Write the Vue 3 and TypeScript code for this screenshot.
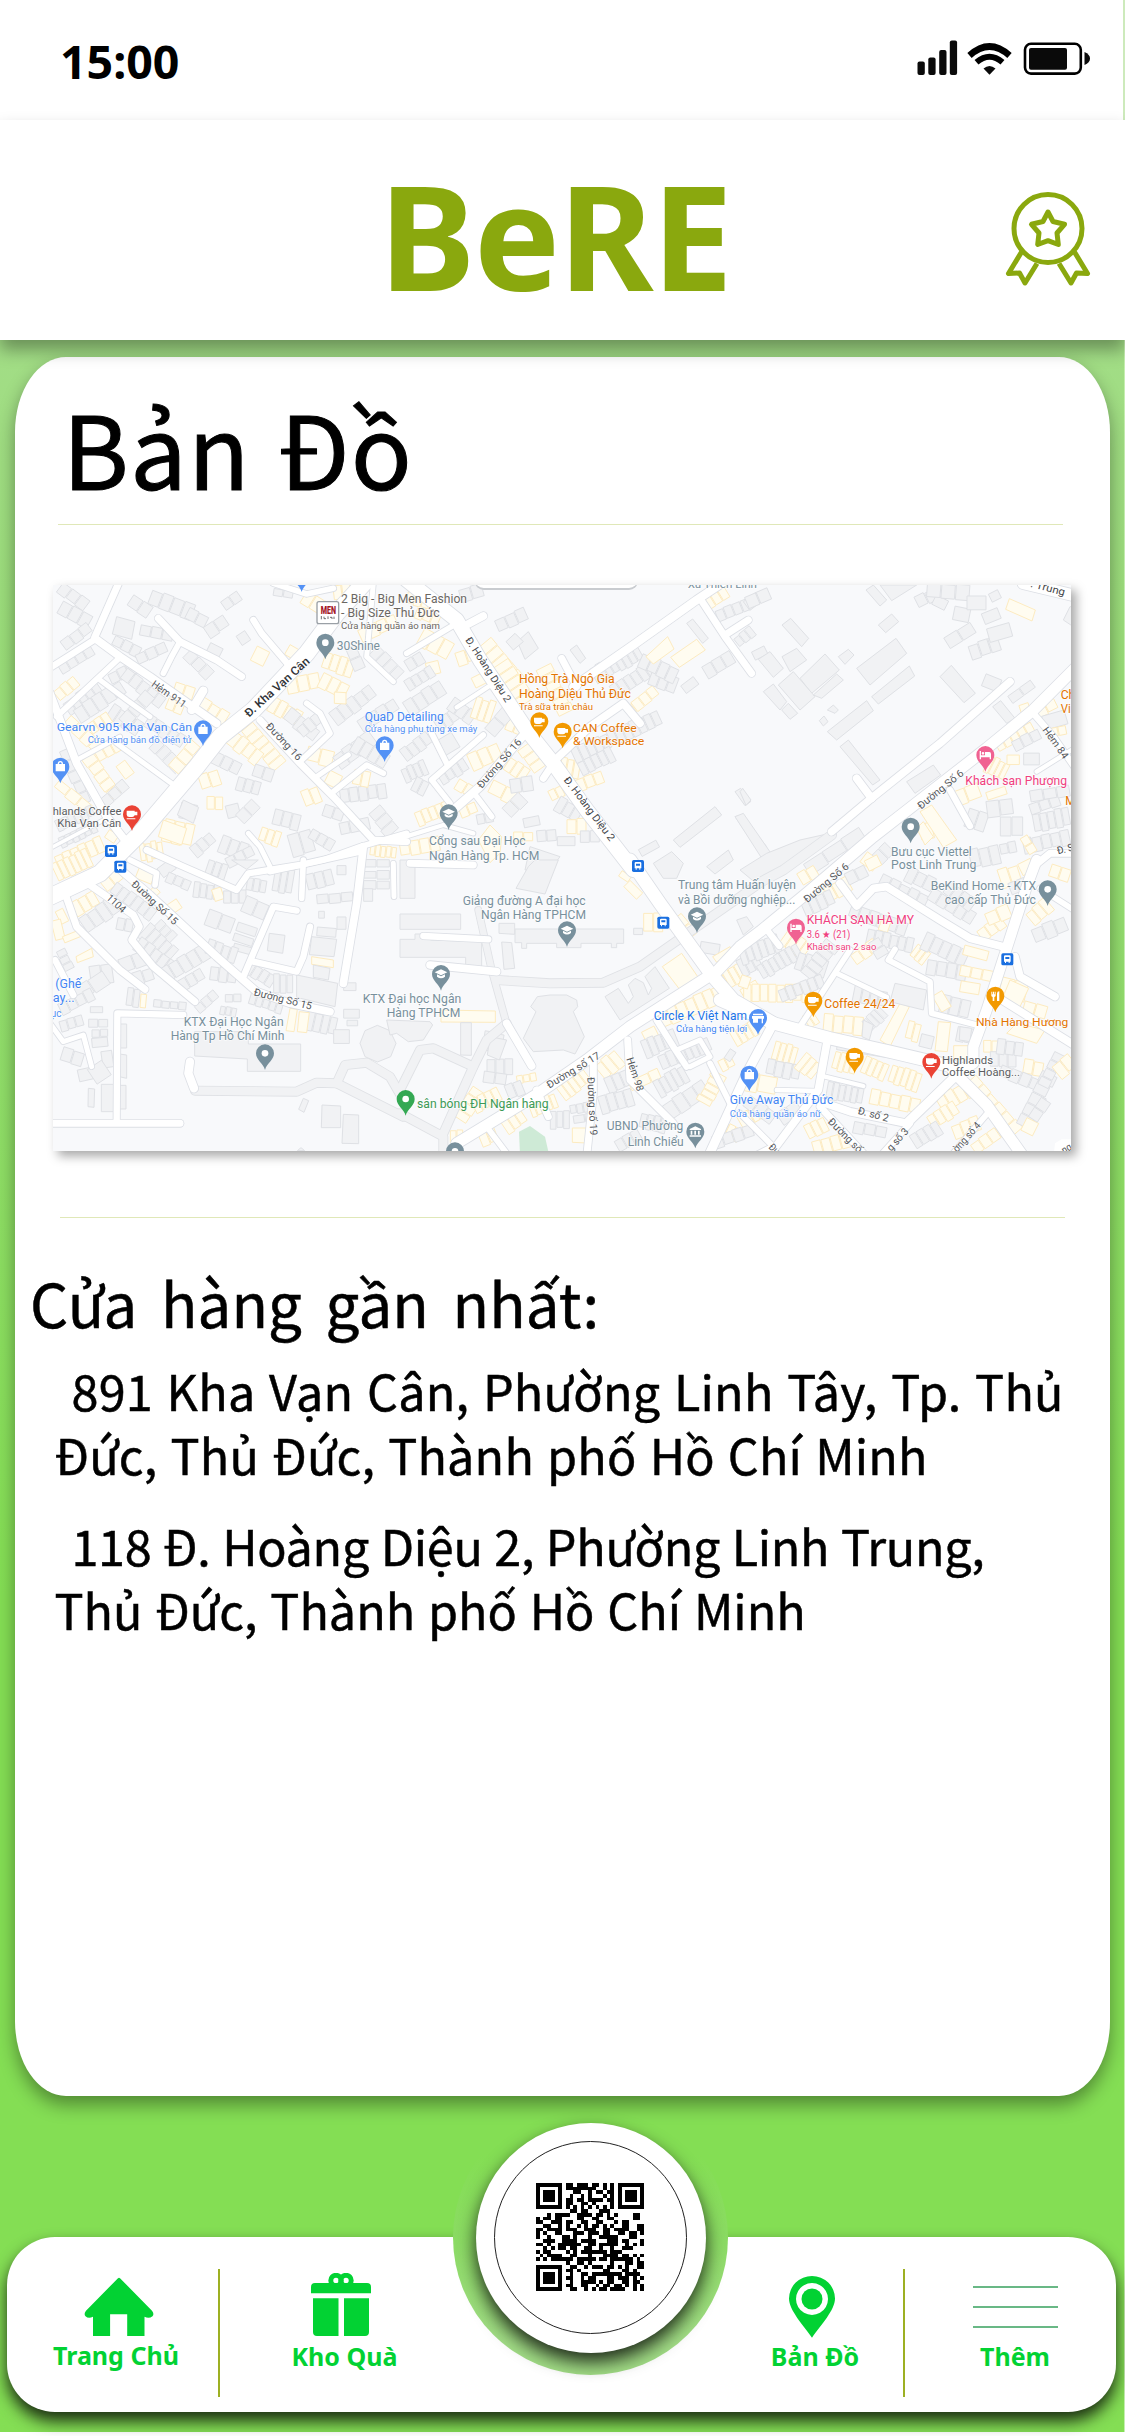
<script setup lang="ts">
type Pt = [number, number]
interface Tile { x: number; y: number; roads: [number, string][]; walks?: [number, string][]; rows: [number, number, number, number, number, number, string][]; blocks: [string, string][] }
interface Label { x: number; y: number; w: number; s: number; t: string; c: string; a?: number; b?: boolean }
interface Pin { x: number; y: number; c: string; k: string }

const tiles: Tile[] = [
  {
    x: 0, y: 0,
    roads: [
      [22, '240,30 165,200'], [20, '165,208 20,300'], [24, '165,205 240,260 330,320 530,460'], [18, '240,262 50,440'],
      [24, '30,370 110,580 200,740 270,830'], [22, '355,145 420,215 530,270 605,320'], [18, '420,215 395,260 370,310'],
      [20, '640,150 665,190 750,290'], [50, '990,20 890,130 800,250 640,420 540,500 470,590 300,790 180,910 20,985'],
      [26, '490,362 455,420'], [16, '180,330 260,390 330,440'], [16, '230,520 415,655'], [14, '110,570 240,500'],
      [22, '660,450 780,580 880,680 1000,810 1100,815'], [18, '800,400 840,430 870,490 785,570'], [16, '830,620 925,555'],
      [18, '880,665 980,585 1030,610'], [16, '1000,40 980,260 1060,335'], [18, '700,40 800,72 880,55'], [16, '625,790 660,830 690,890'],
      [18, '690,905 850,870 960,830 1100,790'], [12, '30,835 200,745'], [20, '320,840 430,890 590,960 625,910 780,885 960,845'],
      [24, '970,830 950,1000 910,1240'],
    ],
    rows: [
      [60, 50, 140, 110, 40, 3, 'g'], [60, 110, 150, 160, 45, 3, 'g'], [70, 230, 150, 170, 36, 3, 'g'], [270, 90, 330, 130, 40, 2, 'g'], [330, 80, 460, 130, 50, 4, 'g'],
      [300, 180, 400, 200, 36, 3, 'g'], [220, 210, 300, 250, 34, 3, 'g'], [290, 270, 380, 230, 36, 3, 'g'], [440, 130, 500, 160, 40, 2, 'g'], [500, 190, 560, 150, 42, 2, 'g'],
      [550, 110, 600, 75, 36, 2, 'g'], [440, 250, 510, 320, 40, 3, 'g'], [500, 240, 540, 260, 50, 1, 'g'], [600, 190, 620, 220, 34, 1, 'g'],
      [60, 300, 160, 240, 34, 4, 'g'], [50, 380, 110, 330, 38, 3, 'y'], [80, 420, 180, 350, 50, 5, 'g'], [110, 440, 250, 350, 50, 5, 'g'], [210, 330, 290, 290, 40, 3, 'g'],
      [250, 310, 370, 400, 42, 5, 'g'], [210, 420, 300, 480, 50, 4, 'g'], [250, 460, 330, 370, 44, 3, 'g'], [320, 450, 430, 520, 44, 5, 'g'], [400, 360, 460, 380, 50, 2, 'y'],
      [380, 400, 430, 420, 36, 2, 'y'], [480, 400, 560, 450, 44, 3, 'y'], [340, 520, 420, 600, 44, 4, 'g'], [400, 600, 470, 520, 40, 3, 'y'], [80, 450, 180, 540, 40, 4, 'y'],
      [150, 480, 210, 440, 40, 3, 'y'], [140, 560, 230, 680, 44, 5, 'y'], [170, 560, 240, 520, 40, 3, 'y'], [240, 580, 270, 620, 34, 1, 'y'], [70, 540, 140, 700, 36, 5, 'g'],
      [50, 640, 150, 720, 34, 3, 'y'], [190, 700, 260, 640, 36, 3, 'g'], [50, 770, 160, 720, 38, 6, 'g'], [60, 820, 170, 770, 38, 6, 'g'], [50, 880, 190, 820, 50, 6, 'y'],
      [200, 790, 230, 810, 30, 1, 'y'], [620, 470, 720, 590, 50, 6, 'y'], [570, 500, 660, 570, 50, 4, 'y'], [690, 400, 780, 450, 50, 4, 'y'], [740, 350, 840, 330, 50, 3, 'y'],
      [840, 330, 920, 370, 50, 3, 'y'], [850, 270, 940, 300, 56, 4, 'y'], [740, 430, 830, 500, 46, 3, 'g'], [800, 550, 880, 570, 50, 2, 'y'], [780, 490, 840, 440, 40, 3, 'g'],
      [740, 240, 775, 260, 40, 1, 'y'], [640, 250, 680, 270, 50, 1, 'y'], [480, 640, 540, 620, 50, 2, 'y'], [500, 700, 550, 700, 40, 2, 'y'], [420, 720, 470, 730, 50, 2, 'g'],
      [520, 560, 600, 600, 44, 3, 'g'], [590, 640, 660, 660, 44, 3, 'g'], [640, 600, 700, 620, 40, 2, 'g'], [560, 730, 600, 720, 44, 1, 'g'], [600, 750, 650, 700, 40, 2, 'g'],
      [370, 780, 460, 800, 70, 3, 'y'], [300, 850, 370, 840, 60, 4, 'y'], [460, 850, 520, 800, 40, 3, 'g'], [540, 820, 620, 850, 60, 3, 'g'], [660, 790, 720, 810, 50, 3, 'y'],
      [700, 740, 780, 760, 50, 3, 'g'], [750, 830, 820, 810, 70, 2, 'g'], [790, 690, 840, 670, 54, 2, 'y'], [860, 620, 900, 640, 46, 1, 'y'], [850, 720, 910, 740, 40, 2, 'g'],
      [900, 680, 1040, 660, 50, 5, 'g'], [1000, 720, 1060, 790, 50, 3, 'g'], [900, 780, 990, 760, 40, 3, 'g'], [990, 840, 1070, 850, 36, 5, 'y'], [890, 580, 1000, 500, 50, 4, 'g'],
      [940, 520, 1040, 580, 50, 4, 'g'], [880, 450, 1000, 360, 50, 5, 'g'], [960, 470, 1070, 400, 40, 4, 'g'], [940, 620, 990, 630, 50, 2, 'y'], [790, 80, 870, 130, 50, 3, 'y'],
      [880, 70, 960, 60, 50, 3, 'y'], [960, 200, 1070, 150, 44, 4, 'y'], [1000, 240, 1080, 320, 44, 4, 'g'], [930, 230, 960, 300, 40, 2, 'g'], [700, 65, 760, 75, 24, 2, 'g'],
      [560, 880, 640, 840, 36, 3, 'g'], [810, 790, 880, 830, 36, 3, 'g'],
    ],
    blocks: [['g', '230,140 285,155 275,208 217,192'], ['g', '430,690 476,712 460,760 412,735'], ['y', '883,366 918,368 918,402 883,400'], ['y', '370,750 440,775 425,825 355,800']],
  },
  {
    x: 1080, y: 0,
    roads: [
      [44, '20,30 170,150 240,270 380,480 460,580 560,720 700,900'], [24, '250,138 190,170'], [18, '170,160 20,250'], [14, '265,350 170,412'],
      [26, '980,30 890,90 700,225 520,350'], [22, '900,85 975,200 1055,310'], [22, '975,195 1045,150'], [22, '485,265 530,350'],
      [24, '460,575 570,470 670,400 720,460'], [22, '430,625 460,580'], [26, '375,490 240,650 160,720'], [18, '150,700 95,630 250,495'],
      [18, '140,580 90,480'], [18, '230,680 275,740'], [14, '0,805 130,765 220,790'],
    ],
    rows: [
      [50, 120, 120, 150, 50, 3, 'y'], [60, 200, 150, 250, 60, 3, 'y'], [20, 80, 90, 100, 40, 3, 'y'], [180, 80, 250, 60, 44, 2, 'g'], [80, 300, 120, 290, 40, 1, 'y'],
      [170, 270, 230, 250, 44, 2, 'y'], [250, 220, 350, 340, 60, 5, 'y'], [300, 280, 380, 400, 60, 5, 'y'], [430, 290, 500, 430, 50, 6, 'y'], [220, 340, 260, 320, 40, 1, 'y'],
      [20, 350, 100, 300, 40, 4, 'g'], [20, 290, 70, 260, 40, 2, 'g'], [20, 420, 130, 350, 50, 4, 'g'], [110, 470, 170, 430, 44, 3, 'g'], [150, 400, 220, 450, 50, 3, 'g'],
      [220, 410, 280, 430, 70, 3, 'y'], [320, 460, 370, 480, 50, 2, 'y'], [10, 560, 90, 500, 44, 4, 'g'], [10, 620, 80, 590, 50, 4, 'g'], [120, 540, 170, 510, 60, 1, 'g'],
      [210, 580, 300, 540, 54, 3, 'y'], [320, 580, 380, 620, 50, 3, 'y'], [370, 530, 420, 600, 50, 3, 'y'], [270, 490, 330, 420, 44, 2, 'g'], [120, 630, 200, 580, 44, 4, 'g'],
      [170, 640, 220, 670, 40, 2, 'y'], [270, 650, 350, 690, 46, 2, 'y'], [40, 640, 80, 660, 46, 2, 'g'], [50, 750, 150, 710, 50, 5, 'y'], [180, 730, 230, 710, 36, 2, 'y'],
      [230, 750, 280, 740, 30, 2, 'g'], [330, 650, 400, 640, 50, 2, 'g'], [320, 730, 370, 680, 44, 2, 'g'], [450, 680, 490, 660, 34, 2, 'y'], [480, 590, 540, 600, 60, 3, 'y'],
      [530, 650, 610, 620, 40, 3, 'y'], [520, 560, 780, 440, 50, 12, 'g'], [540, 600, 640, 550, 50, 5, 'g'], [580, 320, 720, 240, 60, 8, 'g'], [640, 370, 760, 290, 50, 6, 'g'],
      [680, 430, 770, 360, 36, 4, 'y'], [750, 320, 830, 350, 60, 3, 'g'], [720, 270, 830, 320, 50, 4, 'g'], [850, 360, 890, 330, 30, 1, 'g'], [470, 700, 540, 740, 50, 3, 'g'],
      [500, 770, 560, 770, 50, 2, 'y'], [540, 800, 600, 800, 36, 2, 'g'], [370, 760, 420, 750, 34, 1, 'g'], [410, 800, 470, 795, 34, 2, 'g'], [915, 100, 980, 60, 50, 3, 'y'],
      [950, 140, 1050, 100, 40, 4, 'g'], [1010, 220, 1060, 180, 36, 3, 'g'], [915, 310, 1000, 260, 44, 3, 'g'], [1040, 110, 1080, 80, 40, 1, 'g'], [290, 170, 380, 130, 44, 3, 'g'],
      [0, 840, 120, 820, 44, 4, 'y'], [340, 800, 400, 800, 30, 2, 'y'], [720, 850, 775, 820, 26, 1, 'g'],
    ],
    blocks: [['g', '352,215 385,185 415,235 375,268'], ['g', '318,215 345,190 370,215 340,240'], ['g', '510,240 530,225 557,265 540,280'], ['y', '738,260 803,200 822,237 760,282'], ['y', '812,262 890,208 916,240 838,292'], ['g', '820,810 945,710 965,735 840,832'], ['g', '860,160 878,147 925,205 908,220'], ['g', '1005,740 1025,735 1100,830 1100,880'], ['y', '235,810 270,765 305,800 300,850 270,878'], ['g', '390,830 480,860 450,900 375,900'], ['g', '472,800 525,800 525,827 472,827'], ['g', '1005,665 1022,655 1052,695 1035,707'], ['g', '760,880 815,845 850,880 830,925 790,925'], ['g', '920,890 985,840 1000,870 945,912']],
  },
  {
    x: 2100, y: 0,
    roads: [
      [34, '1020,280 880,420 740,535 400,800 200,970 60,1085 0,1130 -80,1215'], [24, '810,335 600,520 400,680 275,785'], [24, '350,625 395,685'],
      [20, '880,430 940,500 1010,600'], [14, '1010,530 890,605'], [20, '630,660 690,768'], [36, '850,40 1010,78'], [22, '1010,850 930,850 880,890'],
    ],
    walks: [[28, '275,795 130,900 70,932']],
    rows: [
      [20, 100, 90, 70, 40, 2, 'g'], [40, 260, 80, 240, 30, 1, 'g'], [530, 100, 590, 70, 40, 2, 'g'], [580, 90, 620, 110, 34, 1, 'g'], [560, 60, 690, 70, 50, 3, 'g'],
      [620, 220, 700, 170, 40, 2, 'g'], [640, 130, 690, 140, 44, 1, 'g'], [680, 100, 740, 100, 50, 1, 'g'], [730, 150, 780, 130, 40, 1, 'g'], [750, 85, 780, 70, 30, 1, 'g'],
      [690, 250, 780, 220, 50, 3, 'g'], [745, 200, 815, 180, 50, 1, 'g'], [730, 330, 780, 350, 40, 1, 'g'], [810, 390, 880, 340, 30, 2, 'g'], [840, 420, 870, 410, 30, 1, 'y'],
      [890, 430, 950, 400, 34, 2, 'y'], [910, 460, 980, 440, 50, 1, 'g'], [930, 490, 980, 480, 30, 2, 'y'], [740, 580, 800, 610, 60, 4, 'y'], [770, 530, 880, 470, 36, 5, 'y'],
      [800, 570, 840, 570, 30, 1, 'y'], [850, 570, 900, 570, 40, 1, 'g'], [820, 530, 900, 490, 36, 3, 'g'], [640, 690, 720, 660, 50, 2, 'y'], [740, 680, 800, 660, 30, 1, 'y'],
      [680, 740, 740, 760, 60, 2, 'g'], [740, 720, 820, 710, 50, 2, 'g'], [780, 770, 850, 770, 60, 2, 'g'], [870, 720, 960, 690, 34, 3, 'g'], [880, 760, 990, 740, 60, 5, 'g'],
      [850, 830, 990, 800, 50, 5, 'g'], [870, 680, 990, 660, 36, 3, 'g'], [850, 800, 880, 850, 30, 2, 'y'], [690, 870, 780, 850, 60, 3, 'g'], [780, 840, 830, 830, 36, 2, 'g'],
      [840, 900, 880, 880, 40, 1, 'y'], [370, 860, 410, 890, 40, 1, 'y'], [540, 790, 580, 780, 50, 2, 'y'], [410, 870, 450, 830, 50, 2, 'g'], [200, 900, 370, 790, 44, 3, 'g'],
    ],
    blocks: [['g', '378,60 400,45 440,90 420,108'], ['g', '420,45 530,45 455,92'], ['g', '415,165 455,132 476,155 437,188'], ['g', '126,165 152,145 206,205 185,230'], ['g', '55,268 90,245 130,295 100,322'], ['g', '126,260 170,235 200,270 150,305'], ['g', '180,325 255,252 298,300 215,370'], ['g', '115,345 160,305 225,380 180,420'], ['g', '70,365 100,342 140,395 120,420'], ['g', '125,420 145,400 173,430 150,448'], ['g', '220,375 290,312 310,330 245,385'], ['g', '350,295 468,205 500,250 390,345'], ['g', '395,380 508,288 524,318 415,402'], ['g', '262,485 380,392 400,422 290,510'], ['g', '300,530 325,510 420,630 398,645'], ['g', '600,320 634,286 706,370 672,398'], ['g', '295,260 325,238 342,255 315,283'], ['g', '758,410 782,392 825,445 800,460'], ['y', '808,86 886,120 876,153 797,118'], ['g', '990,110 1000,110 1000,170 970,150'], ['g', '500,635 580,585 602,615 525,670'], ['y', '540,725 575,705 650,810 610,832'], ['y', '530,775 550,755 580,800 555,825'], ['g', '-15,740 10,730 100,860 75,880'], ['g', '0,665 8,655 33,690 18,706'], ['g', '238,452 252,438 264,455 250,468'], ['g', '262,420 280,405 295,420 285,430']],
  },
  {
    x: 0, y: 870,
    roads: [
      [24, '225,15 330,105 530,290 650,395 750,430 870,455'], [22, '150,75 280,165 298,200 275,240 340,320 465,425'], [22, '75,100 110,200 240,330 315,388'],
      [20, '610,350 700,140 770,152'], [20, '640,305 770,335 790,290 810,200'], [18, '790,0 785,115'], [18, '270,0 350,40 345,75'], [20, '45,300 100,405'],
      [20, '230,785 232,460 430,465'], [22, '20,790 420,790'], [16, '30,490 70,545 130,525 155,620'], [26, '450,605 445,640 462,685'], [16, '1060,10 1062,110'],
    ],
    walks: [[26, '465,692 770,695 830,668 890,670 1090,770'], [26, '890,670 915,615 980,608 1050,650 1090,720'], [26, '1080,690 1140,570 1180,565 1300,620'], [26, '1080,760 1210,830 1210,900'], [26, '1210,820 1300,620 1340,540 1400,490']],
    rows: [
      [45, 40, 150, -10, 60, 6, 'y'], [190, 80, 240, 40, 40, 2, 'y'], [100, 150, 170, 110, 50, 3, 'y'], [55, 150, 75, 190, 30, 1, 'y'], [45, 180, 60, 240, 34, 1, 'y'],
      [130, 200, 230, 130, 60, 4, 'g'], [220, 80, 340, 170, 44, 6, 'g'], [290, 40, 340, 60, 36, 1, 'y'], [330, 90, 350, 110, 34, 1, 'y'], [390, 150, 420, 130, 34, 1, 'y'],
      [350, 190, 400, 240, 40, 3, 'g'], [230, 190, 280, 200, 40, 2, 'g'], [310, 210, 400, 290, 60, 5, 'g'], [290, 250, 400, 330, 50, 5, 'g'], [370, 350, 500, 270, 54, 5, 'g'],
      [420, 380, 490, 340, 40, 3, 'g'], [360, 40, 400, 10, 36, 1, 'g'], [380, 50, 450, 80, 34, 3, 'g'], [460, 90, 540, 100, 50, 4, 'g'], [520, 110, 550, 100, 40, 1, 'y'],
      [550, 110, 620, 110, 40, 3, 'g'], [500, 20, 560, 40, 50, 3, 'g'], [620, 70, 680, 80, 40, 3, 'g'], [610, 130, 680, 160, 54, 2, 'g'], [500, 170, 580, 200, 50, 2, 'g'],
      [590, 200, 650, 220, 30, 1, 'g'], [580, 230, 640, 250, 26, 1, 'g'], [580, 260, 635, 275, 22, 1, 'g'], [500, 260, 590, 290, 50, 4, 'g'], [510, 340, 590, 350, 50, 3, 'g'],
      [620, 320, 700, 370, 44, 4, 'g'], [630, 410, 730, 440, 50, 5, 'g'], [700, 370, 760, 370, 60, 3, 'g'], [700, 60, 760, 70, 80, 3, 'g'], [800, 70, 880, 50, 50, 3, 'g'],
      [830, 120, 940, 110, 30, 3, 'g'], [890, 30, 920, 30, 30, 1, 'g'], [835, 165, 855, 165, 24, 1, 'g'], [890, 190, 920, 190, 40, 1, 'g'], [830, 215, 890, 220, 30, 1, 'g'],
      [800, 480, 890, 500, 60, 4, 'g'], [880, 530, 930, 530, 50, 1, 'g'], [910, 380, 950, 380, 24, 1, 'g'], [910, 460, 960, 460, 30, 1, 'g'], [920, 490, 955, 490, 20, 1, 'g'],
      [540, 450, 590, 460, 30, 3, 'g'], [555, 415, 605, 415, 26, 2, 'g'], [470, 450, 530, 400, 30, 3, 'g'], [240, 320, 320, 290, 50, 2, 'g'], [280, 360, 340, 340, 40, 2, 'g'],
      [260, 410, 300, 415, 60, 2, 'g'], [340, 430, 440, 440, 24, 4, 'g'], [150, 350, 220, 340, 60, 2, 'g'], [110, 410, 200, 350, 50, 2, 'g'], [60, 450, 160, 400, 40, 4, 'g'],
      [60, 500, 130, 480, 36, 3, 'g'], [150, 450, 190, 450, 20, 1, 'g'], [145, 490, 205, 490, 28, 2, 'g'], [155, 520, 205, 520, 24, 2, 'g'], [155, 550, 205, 545, 30, 1, 'g'],
      [65, 580, 130, 600, 44, 2, 'g'], [115, 650, 160, 640, 40, 1, 'g'], [185, 600, 220, 595, 50, 1, 'g'], [155, 650, 200, 620, 60, 1, 'g'], [60, 270, 90, 330, 30, 3, 'g'],
      [70, 240, 120, 220, 20, 1, 'y'], [970, 10, 1050, 10, 26, 2, 'g'], [970, 45, 1050, 45, 26, 2, 'g'], [970, 75, 1050, 75, 26, 2, 'g'], [970, 105, 1000, 105, 40, 1, 'g'],
    ],
    blocks: [['g', '688,220 735,226 728,280 682,272'], ['g', '815,230 890,238 882,290 808,284'], ['y', '815,290 880,300 880,323 815,313'], ['g', '820,315 870,325 865,360 820,352'], ['g', '770,345 893,370 885,440 770,412'], ['y', '750,445 772,448 762,515 738,512'], ['y', '778,455 808,458 800,518 772,515'], ['y', '303,402 320,404 316,444 300,442'], ['y', '108,290 155,265 160,290 112,308'], ['g', '464,515 625,515 625,552 782,552 782,634 622,634 622,597 464,588'], ['g', '145,685 164,687 162,742 144,740'], ['g', '184,673 224,673 224,755 184,755'], ['g', '240,492 260,492 260,564 240,564'], ['g', '238,582 260,585 260,655 238,650'], ['g', '238,676 258,676 258,747 238,747'], ['g', '846,735 902,738 902,803 844,803'], ['g', '910,763 956,765 956,851 906,850'], ['g', '790,715 806,722 792,757 776,748'], ['g', '575,0 655,0 620,28'], ['g', '960,550 975,512 1012,496 1050,512 1068,550 1052,590 1012,606 975,590'], ['g', '772,872 783,863 794,872']],
  },
  {
    x: 1080, y: 870,
    roads: [
      [40, '690,0 780,130 870,255 935,345 1000,420 1120,490'], [34, '940,340 690,500 560,600 400,710 170,850'], [22, '580,600 580,700 560,890'],
      [22, '683,540 690,660 820,790'], [20, '770,480 820,560 860,620'], [16, '830,570 900,540 930,590 870,620'], [24, '320,490 395,618'],
      [20, '70,228 265,238'], [24, '90,315 290,335'], [18, '260,800 320,880'], [22, '30,10 220,15'], [18, '930,610 990,730'], [22, '410,690 445,770'],
    ],
    walks: [[20, '235,150 275,330 318,485'], [26, '290,360 450,370 610,368 720,320 870,215 1090,62']],
    rows: [
      [660, 40, 690, 60, 24, 1, 'y'], [680, 70, 720, 110, 26, 1, 'y'], [730, 190, 790, 190, 60, 2, 'y'], [830, 170, 880, 230, 36, 2, 'y'], [700, 215, 730, 215, 24, 1, 'g'],
      [900, 260, 960, 270, 40, 1, 'g'], [960, 370, 1030, 330, 60, 4, 'y'], [1020, 330, 1080, 300, 60, 3, 'g'], [1030, 410, 1080, 380, 50, 2, 'y'],
      [780, 480, 970, 400, 60, 7, 'y'], [730, 530, 770, 510, 34, 1, 'y'], [730, 570, 830, 530, 60, 5, 'g'], [780, 610, 850, 580, 50, 3, 'g'], [840, 590, 930, 550, 50, 5, 'g'],
      [600, 640, 660, 590, 60, 3, 'y'], [620, 680, 690, 650, 50, 3, 'g'], [600, 740, 700, 710, 60, 4, 'g'], [690, 680, 780, 640, 36, 3, 'y'], [770, 690, 860, 640, 60, 5, 'g'],
      [800, 760, 920, 680, 60, 4, 'g'], [910, 730, 960, 640, 50, 5, 'y'], [960, 620, 1000, 600, 40, 2, 'y'], [1000, 540, 1070, 500, 50, 4, 'y'], [980, 600, 1000, 570, 24, 1, 'g'],
      [480, 700, 560, 640, 60, 5, 'y'], [390, 750, 470, 720, 50, 5, 'y'], [450, 780, 510, 780, 60, 3, 'g'], [510, 750, 570, 740, 30, 3, 'g'], [520, 780, 590, 770, 26, 2, 'g'],
      [180, 780, 240, 690, 50, 4, 'y'], [220, 740, 300, 700, 50, 4, 'y'], [310, 800, 370, 760, 60, 3, 'y'], [240, 840, 290, 820, 50, 2, 'y'], [350, 660, 410, 650, 24, 3, 'y'],
      [260, 620, 340, 620, 50, 3, 'g'], [250, 650, 320, 660, 36, 2, 'g'], [320, 700, 370, 680, 50, 2, 'g'], [1020, 790, 1090, 750, 50, 4, 'y'], [960, 800, 1020, 830, 44, 3, 'y'],
      [940, 850, 1060, 810, 40, 4, 'g'], [650, 860, 720, 820, 40, 3, 'g'], [720, 780, 800, 800, 50, 4, 'g'], [150, 830, 190, 830, 40, 2, 'y'], [250, 540, 310, 550, 60, 2, 'g'],
    ],
    blocks: [['g', '0,0 45,0 45,115 0,115'], ['g', '0,162 182,162 182,208 0,208'], ['g', '0,238 45,238 45,222 92,222 92,240 245,245 245,325 197,325 197,292 0,292'], ['g', '345,207 671,207 671,250 650,250 650,263 634,263 634,250 543,250 543,263 470,263 470,250 380,250 380,265 365,265 365,248 345,248'], ['g', '297,190 344,190 344,223 297,220'], ['g', '305,246 335,248 344,325 312,328'], ['g', '385,20 405,0 475,0 435,102 348,85'], ['y', '787,320 845,280 900,360 848,400'], ['y', '938,290 990,260 1000,275 950,307'], ['g', '615,410 655,385 685,430 700,410 685,375 705,355 730,368 745,405 755,385 735,350 765,320 808,385 660,480'], ['g', '392,440 412,410 450,405 500,405 530,420 533,440 520,455 553,530 525,582 490,570 400,575 370,535 408,455'], ['y', '123,450 286,453 286,487 123,486'], ['g', '182,488 214,488 214,586 182,585'], ['g', '270,530 320,540 298,600 262,585'], ['g', '-40,480 90,485 98,495 70,540 25,545 -10,520 -30,525'], ['y', '517,804 562,804 562,849 517,847'], ['k', '357,815 390,798 435,830 447,883 360,883'], ['g', '1010,180 1040,170 1060,200 1030,225']],
  },
  {
    x: 2100, y: 870,
    roads: [
      [38, '-60,420 100,490 270,535 450,575 640,620'], [24, '300,70 350,138 400,85 440,80 600,180 690,235 790,260'], [32, '890,0 860,80 800,265 740,450 700,560 700,610 640,640'],
      [24, '825,290 840,350 945,410'], [20, '85,215 118,258'], [18, '465,268 445,300 570,365 575,460 710,495'], [16, '290,340 440,412'], [18, '330,270 180,500'],
      [28, '100,490 20,640 -100,900'], [24, '262,540 235,690 100,870'], [14, '110,690 235,693'], [14, '255,650 370,678'], [24, '240,725 330,755 500,790'],
      [28, '500,790 650,645'], [34, '640,635 740,735 850,890'], [18, '755,745 640,880'], [20, '510,790 420,890'], [22, '240,740 370,880'], [24, '770,410 1010,560'],
      [18, '900,85 1010,155'], [18, '0,760 100,860'], [20, '100,860 20,900'],
    ],
    rows: [
      [180, 60, 230, 30, 40, 2, 'y'], [240, 120, 330, 70, 50, 4, 'y'], [380, 20, 420, 0, 36, 1, 'y'], [320, 60, 380, 30, 40, 2, 'g'], [420, 60, 560, 130, 44, 5, 'g'],
      [500, 40, 580, 80, 50, 3, 'g'], [570, 100, 700, 180, 44, 5, 'g'], [620, 80, 700, 140, 44, 4, 'g'], [720, 230, 790, 180, 44, 3, 'y'], [740, 180, 810, 150, 44, 2, 'y'],
      [780, 60, 840, 40, 60, 2, 'y'], [810, 90, 860, 70, 40, 2, 'g'], [870, 180, 930, 130, 50, 3, 'y'], [880, 230, 980, 190, 50, 3, 'g'], [930, 30, 990, 50, 40, 2, 'y'],
      [130, 230, 200, 280, 60, 4, 'y'], [190, 150, 280, 110, 50, 4, 'g'], [330, 150, 500, 210, 44, 6, 'g'], [420, 190, 450, 200, 40, 1, 'y'], [380, 230, 520, 260, 50, 6, 'g'],
      [340, 300, 410, 250, 40, 3, 'y'], [400, 240, 430, 290, 40, 2, 'g'], [520, 270, 560, 300, 50, 3, 'y'], [550, 240, 680, 300, 60, 5, 'g'], [560, 320, 680, 340, 50, 4, 'g'],
      [0, 290, 120, 250, 60, 6, 'g'], [60, 340, 180, 270, 50, 7, 'g'], [170, 300, 260, 330, 60, 4, 'g'], [200, 350, 280, 250, 50, 5, 'g'], [10, 400, 210, 400, 56, 8, 'y'],
      [120, 410, 250, 360, 44, 6, 'g'], [0, 360, 30, 370, 40, 1, 'y'], [200, 490, 230, 470, 50, 2, 'y'], [250, 490, 370, 500, 60, 4, 'y'], [380, 500, 430, 450, 50, 4, 'g'],
      [340, 400, 440, 420, 50, 4, 'g'], [500, 510, 540, 520, 60, 2, 'y'], [540, 540, 580, 550, 40, 1, 'g'], [640, 580, 690, 580, 50, 1, 'y'], [650, 520, 700, 530, 50, 2, 'g'],
      [600, 430, 690, 450, 60, 3, 'g'], [590, 400, 620, 450, 40, 1, 'y'], [660, 380, 720, 390, 36, 1, 'y'], [660, 330, 760, 350, 32, 3, 'y'], [670, 270, 745, 290, 36, 1, 'y'],
      [780, 380, 860, 400, 60, 2, 'y'], [850, 440, 920, 460, 40, 2, 'y'], [730, 560, 780, 560, 36, 2, 'y'], [750, 600, 830, 600, 50, 3, 'g'], [770, 560, 850, 570, 50, 3, 'g'],
      [850, 620, 910, 630, 50, 2, 'y'], [780, 630, 900, 680, 40, 4, 'g'], [690, 660, 830, 820, 50, 6, 'y'], [850, 800, 930, 640, 50, 5, 'g'], [860, 820, 880, 780, 40, 1, 'y'],
      [910, 680, 960, 580, 40, 4, 'g'], [950, 640, 1000, 600, 50, 2, 'y'], [880, 780, 920, 720, 36, 2, 'g'], [600, 740, 700, 680, 60, 4, 'y'], [570, 790, 650, 740, 50, 4, 'y'],
      [520, 850, 600, 800, 50, 4, 'g'], [640, 820, 720, 790, 50, 3, 'y'], [700, 870, 800, 800, 40, 4, 'y'], [100, 570, 170, 590, 60, 4, 'y'], [80, 620, 180, 640, 50, 4, 'g'],
      [180, 600, 230, 640, 60, 3, 'y'], [280, 600, 350, 620, 60, 4, 'y'], [370, 610, 440, 640, 60, 4, 'y'], [450, 640, 540, 670, 60, 5, 'y'], [260, 690, 370, 710, 54, 6, 'g'],
      [390, 710, 540, 740, 50, 5, 'y'], [0, 660, 110, 680, 60, 2, 'y'], [20, 720, 100, 780, 44, 3, 'g'], [200, 820, 260, 790, 50, 3, 'y'], [220, 870, 330, 840, 50, 4, 'y'],
      [340, 800, 440, 820, 40, 3, 'g'], [290, 560, 540, 600, 20, 1, 'g'], [120, 780, 180, 740, 50, 2, 'g'],
    ],
    blocks: [['g', '0,30 80,-20 180,-60 270,-80 210,-20 60,80'], ['y', '420,540 480,430 508,440 450,560'], ['y', '595,485 632,488 622,575 585,572'], ['g', '660,500 695,505 690,545 658,540'], ['y', '810,360 866,385 840,440 785,420'], ['y', '800,520 830,490 915,510 890,550'], ['g', '370,480 400,495 388,540 366,530'], ['w', '940,900 945,850 965,838 1010,838 1010,900'], ['g', '465,370 560,390 550,450 450,425']],
  },
]

const parse = (s: string): Pt[] => s.split(' ').map((p) => p.split(',').map(Number) as Pt)
const place = (s: string, t: Tile) => parse(s).map(([x, y]) => `${x + t.x},${y + t.y}`).join(' ')

let seed = 7
const rnd = () => ((seed = (seed * 16807) % 2147483647) / 2147483647)

/* A row of plots standing side by side along the line x1,y1 - x2,y2. */
const plots: { p: string; k: string }[] = []
for (const t of tiles) {
  for (const [x1, y1, x2, y2, depth, n, k] of t.rows) {
    const len = Math.hypot(x2 - x1, y2 - y1)
    const ux = (x2 - x1) / len
    const uy = (y2 - y1) / len
    const step = len / n
    for (let i = 0; i < n; i++) {
      const a = i * step + 1
      const b = (i + 1) * step - 2
      const d1 = -depth * (0.4 + rnd() * 0.12)
      const d2 = depth * (0.36 + rnd() * 0.14)
      const c = (s: number, d: number) => `${(t.x + x1 + ux * s - uy * d).toFixed(1)},${(t.y + y1 + uy * s + ux * d).toFixed(1)}`
      plots.push({ p: [c(a, d1), c(b, d1), c(b, d2), c(a, d2)].join(' '), k })
    }
  }
}
const blocks = tiles.flatMap((t) => t.blocks.map(([k, s]) => ({ k, p: place(s, t) })))
const roads = tiles.flatMap((t) => t.roads.map(([w, s]) => ({ w, p: place(s, t) })))
const walks = tiles.flatMap((t) => (t.walks ?? []).map(([w, s]) => ({ w, p: place(s, t) })))

const grey = '#78909c'
const blue = '#4285f4'
const sky = '#5391f5'
const orange = '#e37400'
const amber = '#f29900'
const pink = '#f0407f'
const dark = '#5b5d61'
const street = '#55585c'

const labels: Label[] = [
  { x: 903, y: 100, w: 378, s: 36, t: '2 Big - Big Men Fashion', c: '#6b6763' },
  { x: 903, y: 140, w: 296, s: 36, t: '- Big Size Thủ Đức', c: '#6b6763' },
  { x: 903, y: 178, w: 297, s: 27, t: 'Cửa hàng quần áo nam', c: '#6b6763' },
  { x: 890, y: 240, w: 130, s: 36, t: '30Shine', c: grey },
  { x: 50, y: 483, w: 406, s: 34, t: 'Gearvn 905 Kha Vạn Cân', c: blue },
  { x: 143, y: 520, w: 312, s: 28, t: 'Cửa hàng bán đồ điện tử', c: sky },
  { x: 974, y: 452, w: 237, s: 36, t: 'QuaD Detailing', c: blue },
  { x: 974, y: 487, w: 338, s: 28, t: 'Cửa hàng phụ tùng xe máy', c: sky },
  { x: 38, y: 736, w: 206, s: 34, t: 'hlands Coffee', c: dark },
  { x: 52, y: 771, w: 192, s: 34, t: 'Kha Vạn Cân', c: dark },
  { x: 1437, y: 339, w: 287, s: 37, t: 'Hồng Trà Ngô Gia', c: orange },
  { x: 1437, y: 384, w: 336, s: 37, t: 'Hoàng Diệu Thủ Đức', c: orange },
  { x: 1437, y: 419, w: 222, s: 28, t: 'Trà sữa trân châu', c: orange },
  { x: 1599, y: 486, w: 191, s: 35, t: 'CAN Coffee', c: orange },
  { x: 1599, y: 525, w: 214, s: 35, t: '& Workspace', c: orange },
  { x: 1167, y: 824, w: 290, s: 37, t: 'Cổng sau Đại Học', c: grey },
  { x: 1167, y: 871, w: 331, s: 37, t: 'Ngân Hàng Tp. HCM', c: grey },
  { x: 1943, y: 54, w: 208, s: 34, t: 'Xu Thiên Linh', c: grey },
  { x: 2776, y: 644, w: 305, s: 37, t: 'Khách sạn Phượng', c: pink },
  { x: 3062, y: 387, w: 44, s: 37, t: 'Ch', c: orange },
  { x: 3062, y: 430, w: 30, s: 37, t: 'Vi', c: orange },
  { x: 3076, y: 705, w: 30, s: 37, t: 'M', c: orange },
  { x: 2553, y: 857, w: 242, s: 37, t: 'Bưu cục Viettel', c: grey },
  { x: 2553, y: 896, w: 256, s: 37, t: 'Post Linh Trung', c: grey },
  { x: 1268, y: 1005, w: 369, s: 37, t: 'Giảng đường A đại học', c: grey },
  { x: 1323, y: 1047, w: 315, s: 37, t: 'Ngân Hàng TPHCM', c: grey },
  { x: 968, y: 1300, w: 296, s: 37, t: 'KTX Đại học Ngân', c: grey },
  { x: 1040, y: 1341, w: 221, s: 37, t: 'Hàng TPHCM', c: grey },
  { x: 431, y: 1368, w: 300, s: 36, t: 'KTX Đại Học Ngân', c: grey },
  { x: 392, y: 1411, w: 341, s: 36, t: 'Hàng Tp Hồ Chí Minh', c: grey },
  { x: 46, y: 1255, w: 78, s: 36, t: '(Ghế', c: blue },
  { x: 38, y: 1296, w: 66, s: 36, t: 'ay...', c: blue },
  { x: 32, y: 1340, w: 32, s: 32, t: 'ục', c: sky },
  { x: 1914, y: 957, w: 354, s: 37, t: 'Trung tâm Huấn luyện', c: grey },
  { x: 1914, y: 1002, w: 352, s: 37, t: 'và Bồi dưỡng nghiệp...', c: grey },
  { x: 2672, y: 960, w: 316, s: 37, t: 'BeKind Home - KTX', c: grey },
  { x: 2714, y: 1002, w: 274, s: 37, t: 'cao cấp Thủ Đức', c: grey },
  { x: 2300, y: 1063, w: 322, s: 36, t: 'KHÁCH SẠN HÀ MY', c: pink },
  { x: 2300, y: 1105, w: 131, s: 30, t: '3.6 ★ (21)', c: pink },
  { x: 2300, y: 1140, w: 209, s: 28, t: 'Khách sạn 2 sao', c: pink },
  { x: 2353, y: 1314, w: 213, s: 37, t: 'Coffee 24/24', c: orange },
  { x: 2808, y: 1367, w: 277, s: 35, t: 'Nhà Hàng Hương', c: orange },
  { x: 2706, y: 1481, w: 153, s: 33, t: 'Highlands', c: dark },
  { x: 2706, y: 1517, w: 234, s: 33, t: 'Coffee Hoàng...', c: dark },
  { x: 1841, y: 1350, w: 280, s: 37, t: 'Circle K Việt Nam', c: '#1a73e8' },
  { x: 1908, y: 1385, w: 213, s: 28, t: 'Cửa hàng tiện lợi', c: blue },
  { x: 2069, y: 1603, w: 311, s: 36, t: 'Give Away Thủ Đức', c: blue },
  { x: 2069, y: 1640, w: 274, s: 28, t: 'Cửa hàng quần áo nữ', c: sky },
  { x: 1131, y: 1614, w: 395, s: 37, t: 'sân bóng ĐH Ngân hàng', c: '#3c9a55' },
  { x: 1700, y: 1681, w: 230, s: 37, t: 'UBND Phường', c: grey },
  { x: 1763, y: 1729, w: 168, s: 37, t: 'Linh Chiểu', c: grey },
  { x: 332, y: 347, w: 118, s: 31, t: 'Hẻm 911', c: street, a: 35 },
  { x: 627, y: 443, w: 248, s: 35, t: 'Đ. Kha Vạn Cân', c: '#303236', a: -42, b: true },
  { x: 676, y: 470, w: 142, s: 31, t: 'Đường 16', c: street, a: 47 },
  { x: 1275, y: 210, w: 225, s: 31, t: 'Đ. Hoàng Diệu 2', c: '#44464a', a: 57 },
  { x: 1570, y: 630, w: 232, s: 31, t: 'Đ. Hoàng Diệu 2', c: '#44464a', a: 53 },
  { x: 1325, y: 657, w: 185, s: 31, t: 'Đường Số 16', c: street, a: -49 },
  { x: 2643, y: 719, w: 168, s: 31, t: 'Đường Số 6', c: street, a: -39 },
  { x: 2302, y: 1000, w: 166, s: 31, t: 'Đường Số 6', c: street, a: -40 },
  { x: 3006, y: 480, w: 110, s: 31, t: 'Hẻm 84', c: street, a: 54 },
  { x: 2970, y: 50, w: 106, s: 31, t: '. Trung', c: '#44464a', a: 15 },
  { x: 3054, y: 853, w: 50, s: 31, t: 'Đ. S', c: '#44464a', a: -14 },
  { x: 197, y: 986, w: 66, s: 31, t: '1104', c: street, a: 42 },
  { x: 272, y: 945, w: 178, s: 31, t: 'Đường Số 15', c: street, a: 43 },
  { x: 640, y: 1276, w: 178, s: 31, t: 'Đường Số 15', c: street, a: 14 },
  { x: 1528, y: 1556, w: 180, s: 31, t: 'Đường số 17', c: street, a: -31 },
  { x: 1642, y: 1522, w: 175, s: 31, t: 'Đường số 19', c: street, a: 87 },
  { x: 1759, y: 1466, w: 105, s: 31, t: 'Hẻm 98', c: street, a: 72 },
  { x: 2452, y: 1631, w: 94, s: 31, t: 'Đ. số 2', c: street, a: 15 },
  { x: 2362, y: 1657, w: 132, s: 31, t: 'Đường số', c: street, a: 45 },
  { x: 2554, y: 1745, w: 80, s: 31, t: 'g số 3', c: street, a: -48 },
  { x: 2752, y: 1748, w: 108, s: 31, t: 'ờng số 4', c: street, a: -48 },
  { x: 2184, y: 1733, w: 34, s: 31, t: 'Đư', c: street, a: 45 },
  { x: 3072, y: 1752, w: 30, s: 31, t: 'ng', c: street, a: -30 },
]

const pins: Pin[] = [
  { x: 785, y: 66, c: sky, k: 'dot' }, { x: 856, y: 268, c: grey, k: 'dot' }, { x: 489, y: 528, c: sky, k: 'bag' }, { x: 61, y: 640, c: sky, k: 'bag' },
  { x: 1034, y: 576, c: sky, k: 'bag' }, { x: 276, y: 783, c: '#ea4335', k: 'cup' }, { x: 1498, y: 504, c: amber, k: 'cup' }, { x: 1568, y: 535, c: amber, k: 'cup' },
  { x: 1226, y: 780, c: grey, k: 'cap' }, { x: 2836, y: 605, c: '#f06292', k: 'bed' }, { x: 2612, y: 820, c: grey, k: 'dot' }, { x: 1581, y: 1131, c: grey, k: 'cap' },
  { x: 1971, y: 1089, c: grey, k: 'cap' }, { x: 1203, y: 1262, c: grey, k: 'cap' }, { x: 675, y: 1500, c: grey, k: 'dot' }, { x: 1097, y: 1637, c: '#34a853', k: 'dot' },
  { x: 1245, y: 1794, c: grey, k: 'dot' }, { x: 1966, y: 1735, c: grey, k: 'bank' }, { x: 2154, y: 1394, c: sky, k: 'shop' }, { x: 2128, y: 1564, c: sky, k: 'bag' },
  { x: 2268, y: 1123, c: '#f06292', k: 'bed' }, { x: 2320, y: 1342, c: amber, k: 'cup' }, { x: 2444, y: 1510, c: amber, k: 'cup' }, { x: 2674, y: 1526, c: '#ea4335', k: 'cup' },
  { x: 2866, y: 1327, c: amber, k: 'fork' }, { x: 3023, y: 1008, c: grey, k: 'dot' },
]
const buses: Pt[] = [[213, 843], [241, 890], [1794, 888], [1870, 1058], [2902, 1168]]

const glyphs: Record<string, string> = {
  bag: 'M-14-58h28v22h-28zM-8-58a8 9 0 0 1 16 0h-4a4 5 0 0 0-8 0z',
  cup: 'M-16-61h24v3h8v11h-8a8 8 0 0 1-8 5h-8a8 8 0 0 1-8-7zM-16-38h26v3h-26z',
  cap: 'M0-64l19 9-19 9-19-9zM-12-49l12 6 12-6v7q-12 9-24 0z',
  bed: 'M-17-62h4v13h12v-10h13q5 0 5 6v16h-4v-6h-26v6h-4zM-11-55a4 4 0 1 1 8 0a4 4 0 1 1-8 0z',
  shop: 'M-15-63h30v5h-30zM-18-56h36v8h-3v14h-4v-14h-11v12h-15v-12h-3z',
  fork: 'M-12-62h3v8h2v-8h3v8h2v-8h3v12q0 3-4 4v12h-5v-12q-4-1-4-4zM5-34v-22q0-7 7-7v29z',
  bank: 'M0-66l17 8v3h-34v-3zM-14-53h5v12h-5zM-3-53h5v12h-5zM8-53h5v12h-5zM-17-39h34v4h-34z',
}

const qr: string[] = [
  '#######.##.###.##.#.#.#######', '#.....#.########..#.#.#.....#', '#.###.#...##..#.##.##.#.###.#', '#.###.#..#..#.#...#.#.#.###.#', '#.###.#.##.##.####.##.#.###.#',
  '#.....#.##..##.#....#.#.....#', '#######.#.#.#.#.#.#.#.#######', '.........##.##...###.........', '...#.####..####.##.#.#....##.', '#.##.##....##..##..##.....##.',
  '##..###.##..##..##...#.##....', '..##..#.#..#.#.##.#.#..##..##', '##.####.###..###..##.####..##', '#.#..##...###.###.##..##.##.#', '#..#...##.#...#..#####...##..',
  '..###..####.####...###.##...#', '##.#..######..##.#####..#.#.#', '..#.#.##.##..##..#..#..###...', '#.##....#.#.#######.###......', '.#.####..##...#...####.##.#.#',
  '#.#.######.#####.##.######.#.', '........#..##.#.....#...##.##', '#######..##..#.###.##.#.#..##', '#.....#.##.#......##...##.#..', '#.###.#..#..##.########.####.',
  '#.###.#.##..#.##...##.###.#.#', '#.###.#..#..####.#.##..##.##.', '#.....#.##..##..#.##.##.#.#.#', '#######..##..#.#.##.####..#.#',
]
const qrPath = qr.map((r, y) => [...r].map((c, x) => (c === '#' ? `M${x} ${y}h1v1h-1z` : '')).join('')).join('')
</script>

<template>
  <div class="page">
    <div class="status">
      <span class="clock">15:00</span>
      <svg class="signals" width="174" height="36" viewBox="917 40 174 36">
        <rect x="917.5" y="61.5" width="7.3" height="13.5" rx="2" /><rect x="928.3" y="57.5" width="7.3" height="17.5" rx="2" />
        <rect x="939.2" y="50" width="7.3" height="25" rx="2" /><rect x="949.8" y="40.5" width="7.3" height="34.5" rx="2" />
        <g fill="none" stroke="#000">
          <path d="M969.5 55.5Q989.5 37.500 1009.500 55.500" stroke-width="6.500" />
          <path d="M976.500 62.300Q989.500 51.200 1002.500 62.300" stroke-width="6" />
        </g>
        <path d="M983.500 68.500q6-5 12 0l-6 6.300z" />
        <rect x="1025" y="43.800" width="55.800" height="29.800" rx="6" fill="none" stroke="#000" stroke-width="2.600" />
        <rect x="1029" y="48" width="38" height="21.700" rx="2" />
        <path d="M1084.500 52q5.500 2.500 5.500 6.500t-5.500 6.500z" />
      </svg>
    </div>

    <header class="header">
      <span class="brand">BeRE</span>
      <svg class="medal" width="86" height="98" viewBox="1005 190 86 98" fill="none" stroke="#8aa80e" stroke-width="5" stroke-linejoin="round">
        <circle cx="1048" cy="228.500" r="34" />
        <path d="M1048 212l5 9.500 11.500 2.800-7.500 8.700 1.300 11.500-10.300-3.800-10.300 3.800 1.300-11.500-7.500-8.700 11.500-2.800z" />
        <path d="M1021.500 252l-13 21.500 11-.5 5.500 10 12-19.500M1074.500 252l13 21.500-11-.5-5.500 10-12-19.500" />
      </svg>
    </header>

    <main class="body">
      <section class="card">
        <h1 class="title">Bản Đồ</h1>
        <hr class="rule" />
        <svg class="map" width="1018" height="566" viewBox="39 45 3054 1698" preserveAspectRatio="none">
          <rect x="39" y="45" width="3054" height="1698" fill="#f8f9fb" />
          <polygon v-for="(b, i) in plots" :key="'p' + i" :points="b.p" :class="b.k" />
          <polygon v-for="(b, i) in blocks" :key="'b' + i" :points="b.p" :class="b.k" />
          <g fill="none" stroke-linejoin="round" stroke-linecap="round">
            <polyline v-for="(r, i) in walks" :key="'wc' + i" :points="r.p" stroke="#dfe1e5" :stroke-width="r.w + 4" />
            <polyline v-for="(r, i) in walks" :key="'w' + i" :points="r.p" stroke="#f1f2f4" :stroke-width="r.w - 1" />
            <polyline v-for="(r, i) in roads" :key="'c' + i" :points="r.p" stroke="#dcdfe5" :stroke-width="r.w + 4" />
            <polyline v-for="(r, i) in roads" :key="'r' + i" :points="r.p" stroke="#fff" :stroke-width="r.w - 1" />
          </g>
          <rect x="1305" y="10" width="488" height="50" rx="26" fill="#c9ccd0" />
          <rect x="1305" y="5" width="488" height="49" rx="26" fill="#fff" />
          <g v-for="(b, i) in buses" :key="'s' + i" :transform="`translate(${b[0]} ${b[1]})`">
            <rect x="-18" y="-18" width="36" height="36" rx="5" fill="#1a6fe0" />
            <path fill="#fff" d="M-10-9q0-3 4-3h12q4 0 4 3v16h-3v4h-3v-4h-8v4h-3v-4h-3zM-6-7v6h12v-6z" fill-rule="evenodd" />
          </g>
          <rect x="831" y="95" width="65" height="66" rx="6" fill="#fff" stroke="#9aa0a6" stroke-width="4" />
          <text x="842" y="133" textLength="46" lengthAdjust="spacingAndGlyphs" font-size="30" font-weight="900" fill="#a31526">MEN</text>
          <path d="M844 138v10M852 140v6h6M864 139v8M870 142h6v5M882 140v7" stroke="#555" stroke-width="2.500" fill="none" />
          <g v-for="(p, i) in pins" :key="'n' + i" :transform="`translate(${p.x} ${p.y})`">
            <path d="M0 0C-5-20-27-29-27-50A27 27 0 1 1 27-50C27-29 5-20 0 0z" :fill="p.c" />
            <circle v-if="p.k === 'dot'" cy="-50" r="10" fill="#fff" />
            <path v-else :d="glyphs[p.k]" fill="#fff" />
          </g>
          <text
            v-for="(l, i) in labels" :key="'l' + i" :x="l.x" :y="l.y" :font-size="l.s" :fill="l.c" :class="{ strong: l.b }"
            :textLength="l.w" lengthAdjust="spacingAndGlyphs" :transform="l.a ? `rotate(${l.a} ${l.x} ${l.y})` : undefined"
          >{{ l.t }}</text>
        </svg>
        <hr class="rule second" />
        <h2 class="subtitle">Cửa hàng gần nhất:</h2>
        <p class="address"><span class="first wide">891 Kha Vạn Cân, Phường Linh Tây, Tp. Thủ</span><br /><span class="loose">Đức, Thủ Đức, Thành phố Hồ Chí Minh</span></p>
        <p class="address"><span class="first tight">118 Đ. Hoàng Diệu 2, Phường Linh Trung,</span><br /><span class="even">Thủ Đức, Thành phố Hồ Chí Minh</span></p>
      </section>

      <nav class="nav">
        <a class="item home">
          <svg width="70" height="60" viewBox="84 2277 70 60"><path d="M119 2277.700q1 0 2 1.500l31 31.500q2.500 3 .5 5.500-3.500 3-8 .5V2336h-17.300v-21.700h-17.100V2336H93v-19.300q-4.500 2.500-7.500-.5-2-2.500.5-5.500l31-31.500q1-1.500 2-1.500z" /></svg>
          <span>Trang Chủ</span>
        </a>
        <i class="bar"></i>
        <a class="item gift">
          <svg width="60" height="64" viewBox="311 2273 60 64">
            <path d="M315 2283h52q4 0 4 4v6.300h-60V2287q0-4 4-4zM313 2298.300h25.500V2336H317q-4 0-4-4zM344 2298.300h25V2332q0 4-4 4h-21z" />
            <circle cx="336" cy="2280.500" r="5.200" fill="none" stroke="#02d233" stroke-width="5" /><circle cx="346" cy="2280.500" r="5.200" fill="none" stroke="#02d233" stroke-width="5" />
          </svg>
          <span>Kho Quà</span>
        </a>
        <div class="gap">
          <div class="notch"></div>
          <div class="scan">
            <div class="ring">
              <svg width="108" height="108" viewBox="0 0 29 29" shape-rendering="crispEdges"><path :d="qrPath" fill="#000" /></svg>
            </div>
          </div>
        </div>
        <a class="item place">
          <svg width="46" height="62" viewBox="789 2276 46 62">
            <path fill-rule="evenodd" d="M812 2337.700C803 2325 789 2310 789 2298.500a23 22.500 0 0 1 46 0C835 2310 821 2325 812 2337.700zM812 2283a16 16 0 1 0 .01 0z" />
            <circle cx="812" cy="2299" r="10.500" />
          </svg>
          <span>Bản Đồ</span>
        </a>
        <i class="bar"></i>
        <a class="item more">
          <div class="lines"><b></b><b></b><b></b></div>
          <span>Thêm</span>
        </a>
      </nav>
    </main>
  </div>
</template>

<style>
body { margin: 0; background: #fff; }
</style>

<style scoped>
.page { width: 1125px; height: 2436px; display: flex; flex-direction: column; background: #fff; overflow: hidden; font-family: "Noto Sans", sans-serif; }
.status { box-sizing: border-box; height: 120px; flex: none; display: flex; align-items: flex-start; justify-content: space-between; padding: 40px 32px 0 60px; border-right: 2px solid #cdeabc; background: #fff; }
.clock { margin-top: -1px; font: bold 46.5px/44px "Noto Sans", sans-serif; color: #000; }
.signals { display: block; fill: #0a0a0a; }
.header { position: relative; z-index: 2; box-sizing: border-box; height: 220px; flex: none; display: flex; align-items: flex-start; justify-content: flex-end; padding: 70px 34px 0 0; background: #fff; box-shadow: 0 10px 16px rgba(0, 0, 0, .34); }
.brand { flex: 1; padding-left: 379px; margin-top: -30px; font: bold 145px/150px "Noto Sans", sans-serif; letter-spacing: -1.8px; color: #8aa80e; white-space: nowrap; }
.medal { display: block; flex: none; }
.body { box-sizing: border-box; height: 2092px; flex: none; padding: 17px 8px 0 7px; border-right: 1px solid #c5eeb0; background: linear-gradient(#a2dd86, #84de54 60%); }
.card { box-sizing: border-box; height: 1739px; flex: none; margin: 0 6px 0 7.5px; border-radius: 51px / 75px; background: #fff; box-shadow: 0 9px 18px rgba(0, 0, 0, .38); display: flex; flex-direction: column; }
.title { margin: 24px 0 13px 48px; height: 130px; flex: none; font: 400 101px/130px "Noto Sans CJK JP", "Noto Sans", sans-serif; letter-spacing: 1.2px; word-spacing: 3px; -webkit-text-stroke: 1px #000; color: #000; white-space: nowrap; }
.rule { width: 1005px; height: 1px; margin: 0 0 0 43.5px; border: 0; background: #e0e8b8; flex: none; }
.map { display: block; flex: none; margin: 60px 0 0 38.5px; box-shadow: 5px 5px 10px rgba(0, 0, 0, .35); font-family: Roboto, sans-serif; overflow: hidden; }
.map .g { fill: #f1f2f4; stroke: #dfe1e5; stroke-width: 3; }
.map .y { fill: #fffcf0; stroke: #fdebc0; stroke-width: 3; }
.map .k { fill: #ceead6; }
.map .w { fill: #fff; }
.map text { paint-order: stroke; stroke: rgba(255, 255, 255, .75); stroke-width: 4px; }
.map .strong { font-weight: 500; }
.second { margin: 66px 0 0 45.5px; }
.subtitle { margin: 39px 0 3px 15.5px; height: 90px; flex: none; font: 400 60px/90px "Noto Sans CJK JP", "Noto Sans", sans-serif; letter-spacing: .1px; word-spacing: 10px; -webkit-text-stroke: .5px #000; color: #000; white-space: nowrap; }
.address { margin: 8px 0 19px 40px; flex: none; font: 400 48.500px/64px "Noto Sans CJK JP", "Noto Sans", sans-serif; -webkit-text-stroke: .5px #000; color: #000; white-space: nowrap; }
.first { padding-left: 17px; }
.wide { letter-spacing: .25px; word-spacing: 2.5px; }
.loose { letter-spacing: .2px; word-spacing: 2px; }
.tight { letter-spacing: -.3px; word-spacing: 1.2px; }
.even { letter-spacing: 0; word-spacing: 2px; }
.nav { display: flex; height: 175px; margin-top: 141px; border-radius: 48px; background: #fff; box-shadow: 0 9px 16px rgba(0, 0, 0, .8); }
.item { box-sizing: border-box; flex: none; display: flex; flex-direction: column; align-items: center; justify-content: flex-start; font: bold 25px/30px "Noto Sans", sans-serif; color: #02d233; fill: #02d233; white-space: nowrap; }
.item svg { display: block; }
.home { width: 211px; padding: 40px 0 0 7px; }
.home svg { margin-left: 5px; }
.home span { margin-top: 3px; }
.gift { width: 247px; padding: 36px 0 0 2px; }
.gift svg { margin-right: 8px; }
.gift span { margin-top: 4px; }
.place { width: 176px; padding-top: 39px; }
.place svg { margin-right: 6px; }
.place span { margin-top: 3px; }
.more { width: 212px; padding: 49px 0 0 8px; }
.bar { width: 2px; height: 128px; flex: none; margin-top: 32px; background: #9db023; }
.lines { width: 85px; height: 55px; display: flex; flex-direction: column; gap: 18.500px; }
.lines b { height: 1.500px; background: #69b886; }
.gap { position: relative; width: 260px; flex: none; }
.notch { position: absolute; left: -14px; top: -137px; width: 275px; height: 275px; border-radius: 50%; background: linear-gradient(rgba(138, 219, 98, 0) 20%, #8bdb63 50%, #a2dd86 88%); }
.scan { position: absolute; left: 9px; top: -114.500px; width: 230px; height: 230px; border-radius: 50%; background: #fff; display: flex; align-items: center; justify-content: center; box-shadow: 0 9px 18px rgba(0, 0, 0, .8); }
.ring { box-sizing: border-box; width: 193px; height: 193px; margin: 0 1px 1px 0; border: 1px solid #222; border-radius: 50%; display: flex; align-items: center; justify-content: center; }
.ring svg { margin-right: 2px; }
</style>
